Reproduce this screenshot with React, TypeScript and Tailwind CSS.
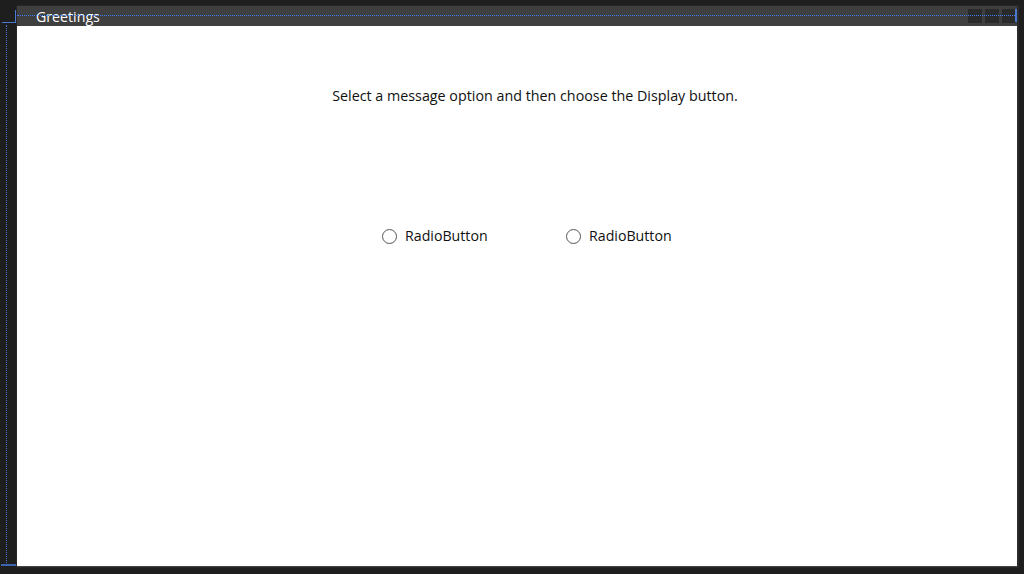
import React from 'react';

const font = { fontFamily: '"Open Sans", "Noto Sans", sans-serif' };

function Radio({ label }: { label: string }) {
  return (
    <label className="w-[184px] flex items-center gap-[8px] text-[14.2px] leading-[20px] text-[#111]">
      <span className="w-[15px] h-[15px] rounded-full border border-[#555] bg-white" />
      <span>{label}</span>
    </label>
  );
}

export default function App() {
  return (
    <div className="relative w-[1024px] h-[574px] bg-[#1e1e1e] overflow-hidden" style={font}>
      {/* designer adorners */}
      <div className="absolute left-[15px] top-[10px] h-[13px] w-[1px] bg-[#4a78d0]" />
      <div className="absolute left-[2px] top-[22px] w-[14px] h-[1px] bg-[#4a78d0]" />
      <div className="absolute left-[6px] top-[25px] h-[538px] border-l border-dotted border-[#4a78d0]" />
      <div className="absolute left-[1px] top-[564px] w-[15px] h-[2px] bg-[#3b63b0]" />

      <div className="ml-[16px] pt-[5px] w-[1003px]">
        <div className="border border-[#262626] border-r-[2px] border-r-[#2b2b2b]">
          <div className="relative h-[20px] bg-[#3f3f3f] flex items-center">
            <span className="pl-[19px] pt-[2px] text-[14.2px] leading-none text-white">Greetings</span>
            <div className="ml-auto flex gap-[3px] pr-[1px]">
              <div className="w-[14px] h-[14px] bg-[#2a2a2a]" />
              <div className="w-[14px] h-[14px] bg-[#2a2a2a]" />
              <div className="w-[14px] h-[14px] bg-[#2a2a2a]" />
            </div>
            <div className="absolute left-0 right-[2px] top-[9px] border-t border-dotted border-[#3f7fff]" />
            <div className="absolute right-0 top-[3px] w-[2px] h-[13px] bg-[#4a78d0]" />
          </div>
          <div className="h-[541px] bg-white border-b border-[#444] flex flex-col">
            <p className="mt-[60px] text-[14.3px] leading-[20px] text-[#111] text-center pl-[36px]">
              Select a message option and then choose the Display button.
            </p>
            <div className="mt-[120px] flex pl-[365px]">
              <Radio label="RadioButton" />
              <Radio label="RadioButton" />
            </div>
          </div>
        </div>
      </div>
    </div>
  );
}
